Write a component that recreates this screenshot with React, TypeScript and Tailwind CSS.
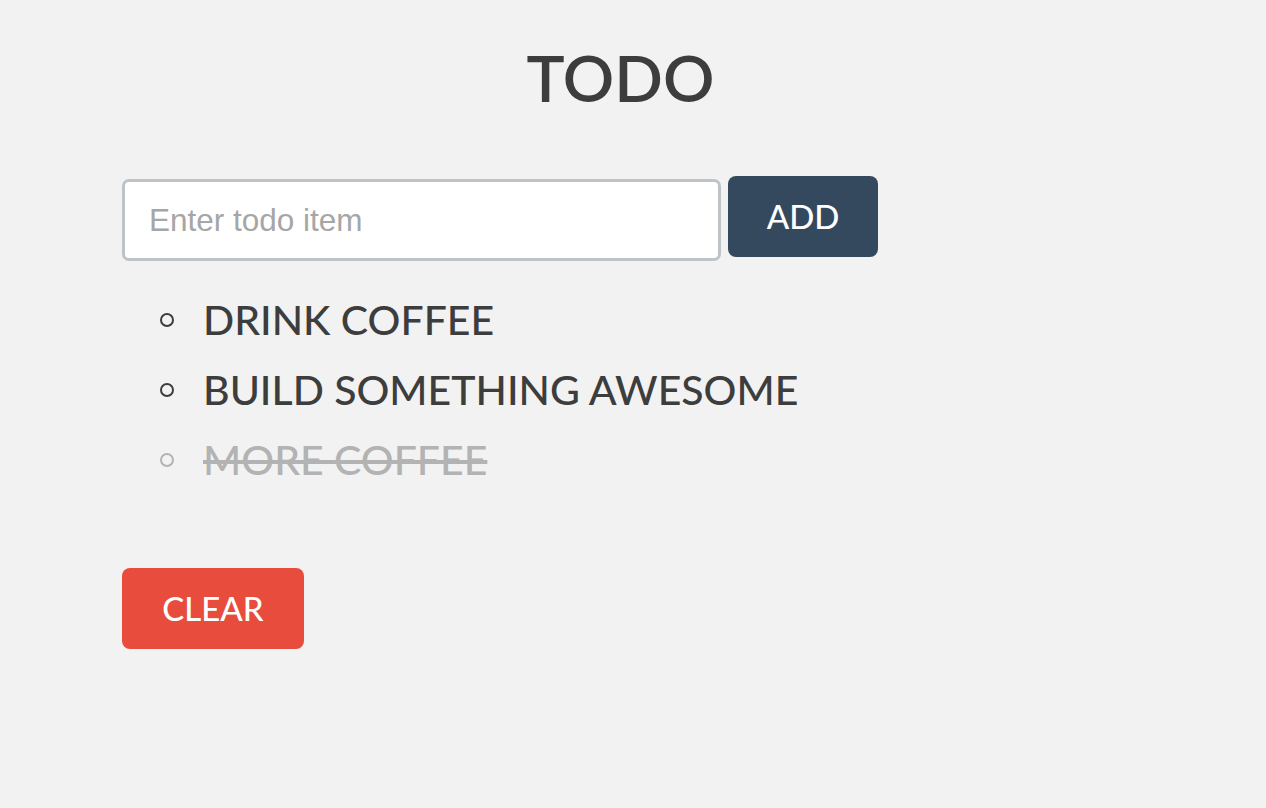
const todos = [
  { text: "DRINK COFFEE", done: false },
  { text: "BUILD SOMETHING AWESOME", done: false },
  { text: "MORE COFFEE", done: true },
];

export default function App() {
  return (
    <main className="min-h-screen bg-[#f2f2f2] pl-[122px] font-['Lato','Open_Sans',sans-serif] text-[#3d3d3d]">
      <div className="w-[997px] pt-[46px]">
        <h1 className="text-center text-[64px] leading-[64px] font-semibold">TODO</h1>

        {/* Input row */}
        <div className="mt-[66px] flex items-start gap-[7px]">
          <input
            type="text"
            placeholder="Enter todo item"
            className="mt-[3px] h-[82px] w-[599px] rounded-[7px] border-[3px] border-[#bdc3c7] bg-white pl-[24px] font-['Liberation_Sans',Arial,sans-serif] text-[31.5px] text-[#3d3d3d] outline-none placeholder:text-[#a6a6a6]"
          />
          <button className="h-[81px] w-[150px] rounded-[8px] bg-[#34495e] text-[33px] font-medium text-white">
            ADD
          </button>
        </div>

        {/* Items */}
        <ul className="mt-[24px]">
          {todos.map((t) => (
            <li
              key={t.text}
              className={[
                "flex h-[70px] items-center pl-[38px] text-[41px] font-medium leading-[70px]",
                t.done ? "text-[#b3b3b3]" : "text-[#3d3d3d]",
              ].join(" ")}
            >
              <span
                aria-hidden
                className={[
                  "mr-[29px] h-[14px] w-[14px] shrink-0 rounded-full border-2",
                  t.done ? "border-[#b3b3b3]" : "border-[#3d3d3d]",
                ].join(" ")}
              />
              <span className={t.done ? "line-through" : ""}>{t.text}</span>
            </li>
          ))}
        </ul>

        <button className="mt-[73px] h-[81px] w-[182px] rounded-[8px] bg-[#e74c3c] text-[33px] font-medium text-white">
          CLEAR
        </button>
      </div>
    </main>
  );
}
